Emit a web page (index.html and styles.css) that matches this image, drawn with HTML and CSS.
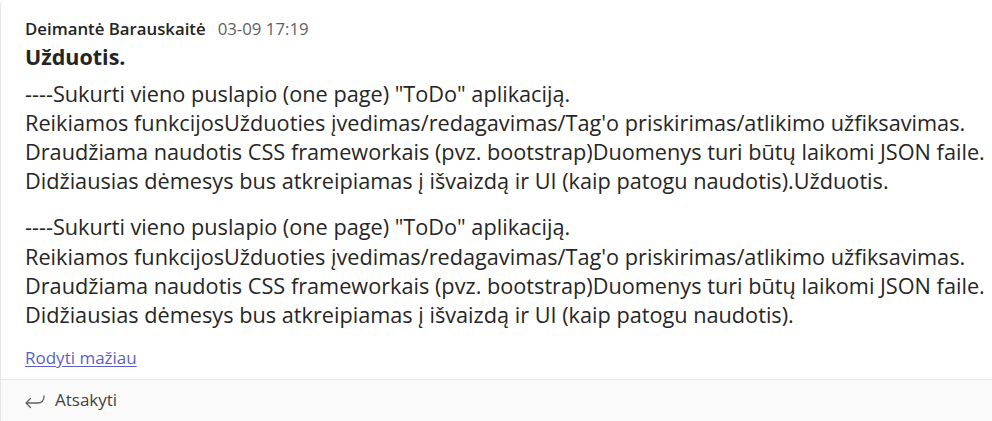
FILE: index.html
```html
<!DOCTYPE html>
<html lang="lt">
<head>
<meta charset="utf-8">
<title>Pranešimas</title>
<link rel="stylesheet" href="styles.css">
</head>
<body>
<div class="card">
  <div class="message">
    <div class="meta">
      <span class="author">Deimantė Barauskaitė</span>
      <span class="time">03-09 17:19</span>
    </div>
    <div class="content">
      <p class="title">Užduotis.</p>
      <p class="para">----Sukurti vieno puslapio (one page) "ToDo" aplikaciją.<br>Reikiamos funkcijosUžduoties įvedimas/redagavimas/Tag'o priskirimas/atlikimo užfiksavimas.<br>Draudžiama naudotis CSS frameworkais (pvz. bootstrap)Duomenys turi būtų laikomi JSON faile.<br>Didžiausias dėmesys bus atkreipiamas į išvaizdą ir UI (kaip patogu naudotis).Užduotis.</p>
      <p class="para second">----Sukurti vieno puslapio (one page) "ToDo" aplikaciją.<br>Reikiamos funkcijosUžduoties įvedimas/redagavimas/Tag'o priskirimas/atlikimo užfiksavimas.<br>Draudžiama naudotis CSS frameworkais (pvz. bootstrap)Duomenys turi būtų laikomi JSON faile.<br>Didžiausias dėmesys bus atkreipiamas į išvaizdą ir UI (kaip patogu naudotis).</p>
    </div>
    <a class="toggle" href="#">Rodyti mažiau</a>
  </div>
  <div class="footer">
    <svg class="reply-icon" width="20" height="18" viewBox="0 0 20 18" aria-hidden="true">
      <path d="M5.5 6.5 L1 11 L5.5 15.5 M1 11 H12.5 C16.5 11 19 8.5 19 4" fill="none" stroke="#616161" stroke-width="1.3" stroke-linecap="round" stroke-linejoin="round"/>
    </svg>
    <span class="reply-label">Atsakyti</span>
  </div>
</div>
</body>
</html>
```

FILE: styles.css
```css
html, body {
  margin: 0;
  padding: 0;
  background: #ffffff;
}

body {
  font-family: "Open Sans", "Noto Sans", sans-serif;
  color: #242424;
  overflow: hidden;
}

.card {
  background: #ffffff;
  border-left: 1px solid #e6e6e6;
  border-top-left-radius: 5px;
  display: flex;
  flex-direction: column;
}

.message {
  padding: 18.5px 10px 10.4px 24px;
  display: flex;
  flex-direction: column;
  align-items: flex-start;
}

.meta {
  display: flex;
  align-items: baseline;
  font-size: 16.8px;
  line-height: 20px;
}

.author {
  font-weight: 600;
  color: #242424;
}

.time {
  color: #616161;
  margin-left: 12px;
}

.content {
  margin-top: 5.5px;
}

.content p {
  margin: 0;
}

.title {
  font-size: 21.5px;
  line-height: 26px;
  font-weight: 700;
  margin-bottom: 8.5px !important;
}

.para {
  font-size: 21.7px;
  line-height: 29.2px;
  white-space: nowrap;
  color: #262626;
}

.para.second {
  margin-top: 17px !important;
}

.toggle {
  margin-top: 17.5px;
  font-size: 17px;
  line-height: 22px;
  color: #5b5fc7;
  text-decoration: underline;
  text-underline-offset: 2px;
}

.footer {
  background: #fafafa;
  border-top: 1px solid #e8e8e8;
  padding: 9px 20px 12px 24px;
  display: flex;
  align-items: center;
  gap: 10px;
}

.reply-icon {
  flex: none;
  margin-top: 1px;
}

.reply-label {
  font-size: 17px;
  line-height: 22px;
  color: #424242;
}
```
